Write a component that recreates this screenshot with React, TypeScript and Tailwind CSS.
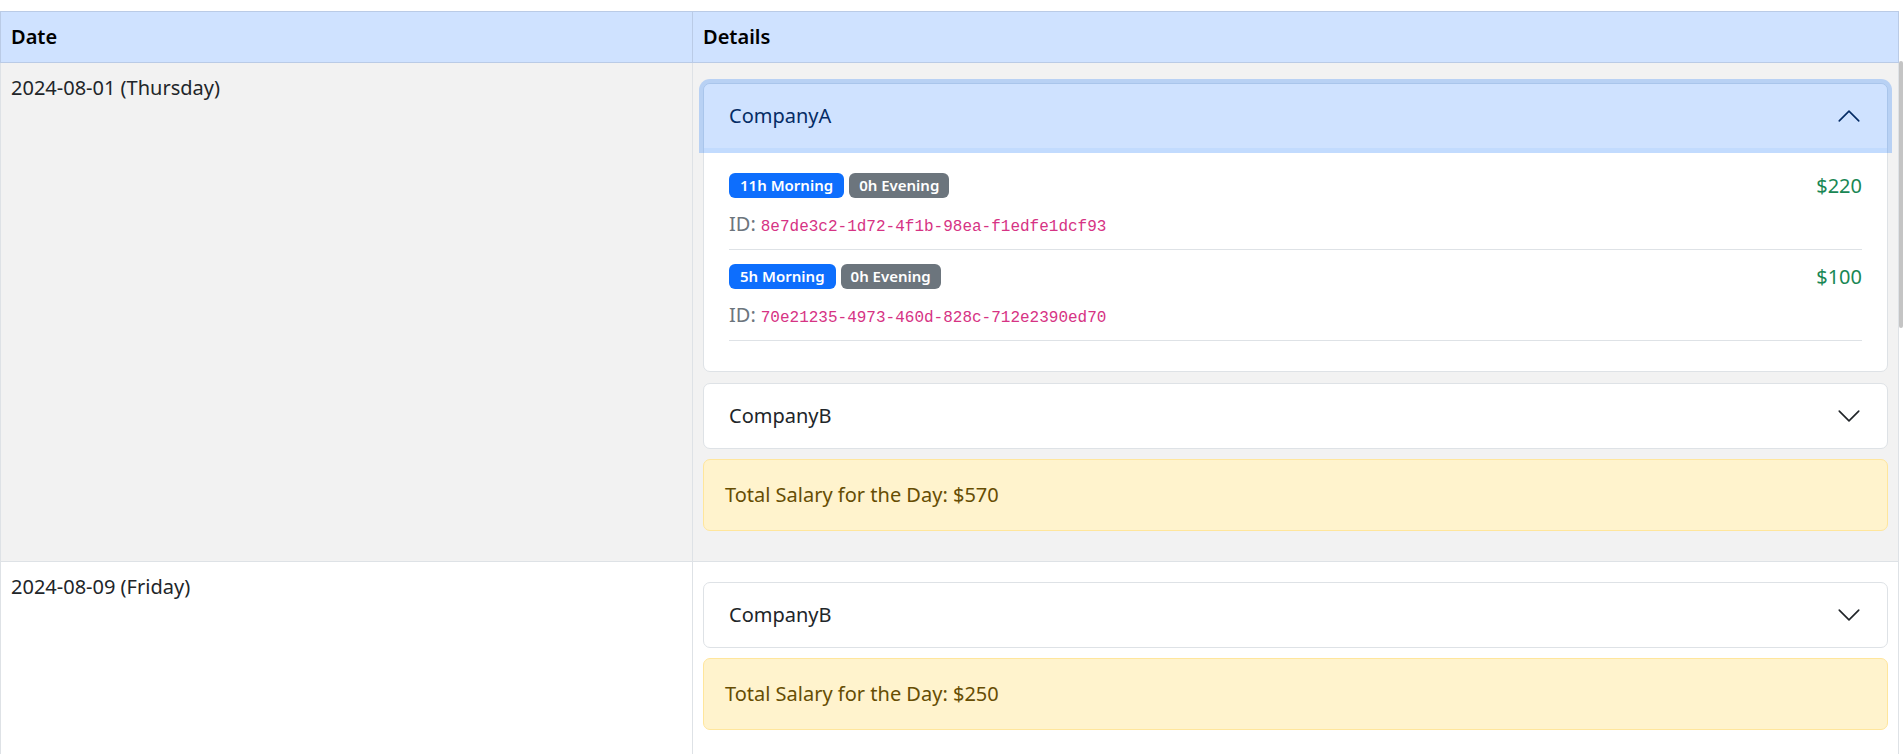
import React from 'react';

type Shift = { morning: number; evening: number; salary: number; id: string };
type Company = { name: string; open: boolean; shifts: Shift[] };
type Day = { date: string; weekday: string; companies: Company[]; total: number };

const days: Day[] = [
  {
    date: '2024-08-01',
    weekday: 'Thursday',
    total: 570,
    companies: [
      {
        name: 'CompanyA',
        open: true,
        shifts: [
          { morning: 11, evening: 0, salary: 220, id: '8e7de3c2-1d72-4f1b-98ea-f1edfe1dcf93' },
          { morning: 5, evening: 0, salary: 100, id: '70e21235-4973-460d-828c-712e2390ed70' },
        ],
      },
      { name: 'CompanyB', open: false, shifts: [] },
    ],
  },
  {
    date: '2024-08-09',
    weekday: 'Friday',
    total: 250,
    companies: [{ name: 'CompanyB', open: false, shifts: [] }],
  },
];

function Chevron({ up, color }: { up?: boolean; color: string }) {
  return (
    <svg
      className={`h-[26px] w-[26px] shrink-0 ${up ? 'rotate-180' : ''}`}
      viewBox="0 0 16 16"
      fill="none"
      stroke={color}
      strokeLinecap="round"
      strokeLinejoin="round"
    >
      <path d="M2 5L8 11L14 5" />
    </svg>
  );
}

function ShiftRow({ shift }: { shift: Shift }) {
  return (
    <div className="flex items-start justify-between border-b border-[#dee2e6] pt-[14px] pb-[10px]">
      <div>
        <div className="flex gap-[5px]">
          <span className="inline-flex h-[25px] items-center rounded-[6px] bg-[#0d6efd] px-[11px] text-[15px] font-semibold leading-none text-white">
            {shift.morning}h Morning
          </span>
          <span className="inline-flex h-[25px] items-center rounded-[6px] bg-[#6c757d] px-[10px] text-[15px] font-semibold leading-none text-white">
            {shift.evening}h Evening
          </span>
        </div>
        <div className="mt-[11px] flex h-[30px] items-baseline gap-[5px] overflow-hidden font-['Noto_Sans',sans-serif] text-[20px] leading-[30px] text-[#6c757d]">
          <span>ID:</span>
          <code className="font-['Liberation_Mono',monospace] text-[16px] leading-[30px] text-[#d63384]">{shift.id}</code>
        </div>
      </div>
      <span className="text-[20px] leading-[25px] text-[#198754]">${shift.salary}</span>
    </div>
  );
}

function CompanyItem({ company }: { company: Company }) {
  if (company.open) {
    return (
      <div className="rounded-[7px] border border-[#dee2e6] bg-white">
        <div className="relative z-10 flex h-[64px] items-center justify-between rounded-t-[6px] bg-[#cfe2ff] px-[25px] shadow-[0_0_0_5px_rgba(13,110,253,0.25)]">
          <span className="text-[20px] leading-[30px] text-[#052c65]">{company.name}</span>
          <Chevron up color="#052c65" />
        </div>
        <div className="px-[25px] pt-[11px] pb-[30px]">
          {company.shifts.map((s) => (
            <ShiftRow key={s.id} shift={s} />
          ))}
        </div>
      </div>
    );
  }
  return (
    <div className="rounded-[7px] border border-[#dee2e6] bg-white">
      <div className="flex h-[64px] items-center justify-between px-[25px]">
        <span className="text-[20px] leading-[30px] text-[#212529]">{company.name}</span>
        <Chevron color="#212529" />
      </div>
    </div>
  );
}

export default function App() {
  return (
    <div className="relative h-[754px] overflow-hidden bg-white pt-[11px] font-['Segoe_UI','Noto_Sans',sans-serif] text-[20px] text-[#212529]">
      <div className="w-[1899px]">
        {/* Header */}
        <div className="grid grid-cols-[692px_1207px] bg-[#cfe2ff] text-black">
          <div className="border-y border-l border-[#bacbe6] px-[10px] py-[10px] font-semibold leading-[30px]">Date</div>
          <div className="border border-[#bacbe6] px-[10px] py-[10px] font-semibold leading-[30px]">Details</div>
        </div>

        {days.map((day, i) => (
          <div
            key={day.date}
            className={`grid grid-cols-[692px_1207px] ${i % 2 === 0 ? 'bg-[#f2f2f2]' : 'bg-white'}`}
          >
            <div className="border-b border-l border-[#dee2e6] px-[10px] pt-[10px] leading-[30px]">
              {day.date} ({day.weekday})
            </div>
            <div className="flex flex-col border-x border-b border-[#dee2e6] px-[10px] pt-[20px] pb-[30px]">
              {day.companies.map((c, j) => (
                <div key={c.name} className={j > 0 ? 'mt-[11px]' : ''}>
                  <CompanyItem company={c} />
                </div>
              ))}
              <div className="mt-[10px] rounded-[7px] border border-[#ffe69c] bg-[#fff3cd] px-[21px] py-[20px] leading-[30px] text-[#664d03]">
                Total Salary for the Day: ${day.total}
              </div>
            </div>
          </div>
        ))}
      </div>

      {/* scrollbar thumb */}
      <div className="absolute right-0 top-[61px] h-[267px] w-[4px] rounded-[2px] bg-[#c4c4c4]" />
    </div>
  );
}
